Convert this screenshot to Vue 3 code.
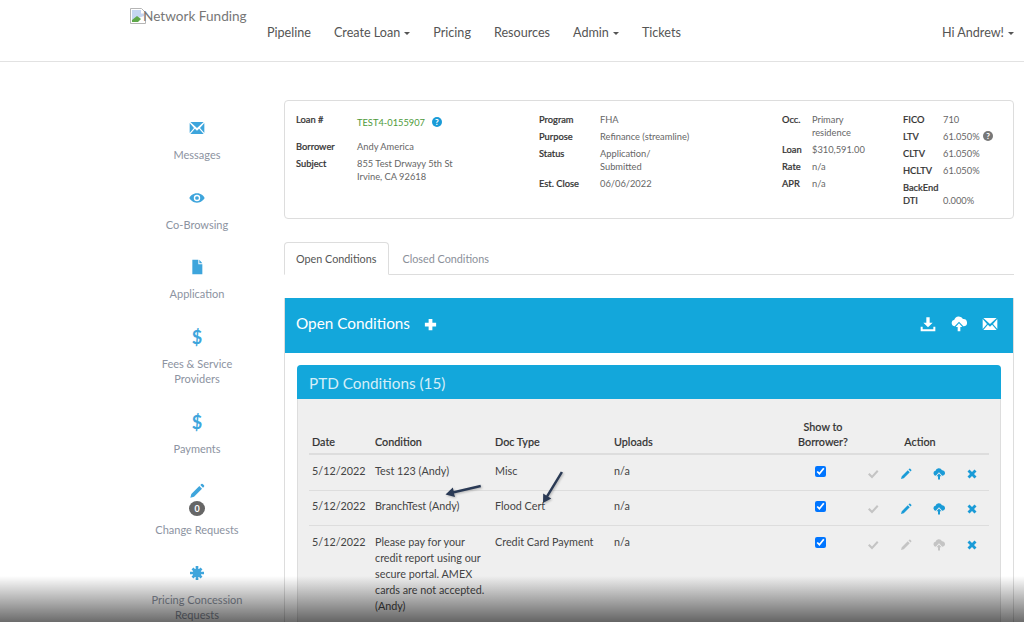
<script setup>
const icons = {
  envelope: "M2 3h20L12 12z M1 4.5v15L7.5 12z M23 4.5v15L16.5 12z M2 21h20l-6.8-7.8L12 16l-3.2-2.8z",
  eye: "M12 5C6 5 2 9 .5 12 2 15 6 19 12 19s10-4 11.5-7C22 9 18 5 12 5z M12 7.2a4.8 4.8 0 1 0 0 9.6 4.8 4.8 0 0 0 0-9.6z M12 9.2a2.8 2.8 0 1 1 0 5.6 2.8 2.8 0 0 1 0-5.6z",
  file: "M5 1h9v7h6v15H5z M15.5 1l4.5 5.2h-4.5z",
  pencil: "M2 22l1.5-5.5L15.5 4.5l4 4L7.5 20.5z M17 3l1.5-1.5a1.5 1.5 0 0 1 2 0l2 2a1.5 1.5 0 0 1 0 2L21 7z",
  cert: "M10 1.5h4v21h-4z M1.5 10h21v4h-21z M3.8 6.6l2.8-2.8 13.6 13.6-2.8 2.8z M17.4 3.8l2.8 2.8L6.6 20.2l-2.8-2.8z M12 5.5a6.5 6.5 0 1 1 0 13 6.5 6.5 0 0 1 0-13z",
  download: "M9.5 2h5v8H19l-7 7-7-7h4.5z M1 16h3v4h16v-4h3v7H1z",
  cloud: "M6 15.5a5 5 0 0 1-1-9.9A7 7 0 0 1 18 4.5a5.5 5.5 0 0 1 1 11h-.5L12 8.5l-6.5 7z M12 11l5 5.5h-3V23h-4v-6.5H7z",
  check: "M2 13l3-3 5 5L20 4l3 3L10 21z",
  remove: "M7 3l5 5 5-5 4 4-5 5 5 5-4 4-5-5-5 5-4-4 5-5-5-5z",
  plus: "M9 3h6v6h6v6h-6v6H9v-6H3V9h6z"
};

const nav = [
  { label: "Pipeline" },
  { label: "Create Loan", caret: true },
  { label: "Pricing" },
  { label: "Resources" },
  { label: "Admin", caret: true },
  { label: "Tickets" }
];

const sideItems = [
  { icon: "envelope", label: "Messages" },
  { icon: "eye", label: "Co-Browsing" },
  { icon: "file", label: "Application" },
  { dollar: true, label: "Fees & Service Providers" },
  { dollar: true, label: "Payments" },
  { icon: "pencil", label: "Change Requests", badge: 0 },
  { icon: "cert", label: "Pricing Concession Requests" }
];

const rows = [
  { date: "5/12/2022", cond: "Test 123 (Andy)", doc: "Misc", active: true },
  { date: "5/12/2022", cond: "BranchTest (Andy)", doc: "Flood Cert", active: true },
  {
    date: "5/12/2022",
    cond: "Please pay for your credit report using our secure portal. AMEX cards are not accepted. (Andy)",
    doc: "Credit Card Payment",
    active: false
  }
];
</script>

<template>
  <div class="page">
    <header class="topbar">
      <div class="logo">
        <svg class="broken" viewBox="0 0 16 16">
          <path d="M.5.5h11l4 4v11H.5z" fill="#fff" stroke="#b5b5b5" />
          <path d="M2 2h9v3.5h3V8L2 12z" fill="#c5d6f2" />
          <path d="M2 14v-2l5-4 4 3-3 3z" fill="#5fa84a" />
        </svg>
        <span>Network Funding</span>
      </div>
      <nav class="nav">
        <a v-for="n in nav" :key="n.label" class="nav-link">
          {{ n.label }}<i v-if="n.caret" class="caret"></i>
        </a>
      </nav>
      <a class="nav-link user">Hi Andrew!<i class="caret"></i></a>
    </header>

    <div class="main">
      <aside class="side">
        <div v-for="s in sideItems" :key="s.label" class="side-item">
          <div class="side-icon">
            <span v-if="s.dollar" class="dollar">$</span>
            <svg v-else viewBox="0 0 24 24">
              <path :fill-rule="s.icon === 'eye' ? 'evenodd' : 'nonzero'" :d="icons[s.icon]" />
            </svg>
          </div>
          <span v-if="s.badge !== undefined" class="badge">{{ s.badge }}</span>
          <div class="side-label">{{ s.label }}</div>
        </div>
      </aside>

      <div class="content">
        <section class="loan-card">
          <dl class="col col1">
            <dt class="tall">Loan #</dt>
            <dd class="tall">
              <span class="loan-no">TEST4-0155907</span>
              <span class="help blue">?</span>
            </dd>
            <dt>Borrower</dt><dd>Andy America</dd>
            <dt>Subject</dt><dd>855 Test Drwayy 5th St<br />Irvine, CA 92618</dd>
          </dl>
          <dl class="col col2">
            <dt>Program</dt><dd>FHA</dd>
            <dt>Purpose</dt><dd>Refinance (streamline)</dd>
            <dt>Status</dt><dd>Application/<br />Submitted</dd>
            <dt>Est. Close</dt><dd>06/06/2022</dd>
          </dl>
          <dl class="col col3">
            <dt>Occ.</dt><dd>Primary<br />residence</dd>
            <dt>Loan</dt><dd>$310,591.00</dd>
            <dt>Rate</dt><dd>n/a</dd>
            <dt>APR</dt><dd>n/a</dd>
          </dl>
          <dl class="col col4">
            <dt>FICO</dt><dd>710</dd>
            <dt>LTV</dt><dd>61.050% <span class="help grey">?</span></dd>
            <dt>CLTV</dt><dd>61.050%</dd>
            <dt>HCLTV</dt><dd>61.050%</dd>
            <dt>BackEnd DTI</dt><dd class="bottom">0.000%</dd>
          </dl>
        </section>

        <div class="tabs">
          <a class="tab active">Open Conditions</a>
          <a class="tab">Closed Conditions</a>
        </div>

        <section class="panel">
          <div class="panel-head">
            <h2>Open Conditions</h2>
            <svg class="head-plus" viewBox="0 0 24 24"><path :d="icons.plus" /></svg>
            <div class="head-icons">
              <svg viewBox="0 0 24 24"><path :d="icons.download" /></svg>
              <svg viewBox="0 0 24 24"><path :d="icons.cloud" /></svg>
              <svg viewBox="0 0 24 24"><path :d="icons.envelope" /></svg>
            </div>
          </div>
          <div class="panel-body">
            <div class="inner">
              <h3>PTD Conditions (15)</h3>
              <div class="inner-body">
                <table>
                  <thead>
                    <tr>
                      <th class="c-date">Date</th>
                      <th class="c-cond">Condition</th>
                      <th class="c-doc">Doc Type</th>
                      <th class="c-up">Uploads</th>
                      <th class="c-show">Show to<br />Borrower?</th>
                      <th colspan="4" class="c-action">Action</th>
                    </tr>
                  </thead>
                  <tbody>
                    <tr v-for="r in rows" :key="r.cond">
                      <td>{{ r.date }}</td>
                      <td>{{ r.cond }}</td>
                      <td>{{ r.doc }}</td>
                      <td>n/a</td>
                      <td><input type="checkbox" checked /></td>
                      <td class="act"><svg viewBox="0 0 24 24" class="off"><path :d="icons.check" /></svg></td>
                      <td class="act"><svg viewBox="0 0 24 24" :class="{ off: !r.active }"><path :d="icons.pencil" /></svg></td>
                      <td class="act"><svg viewBox="0 0 24 24" :class="{ off: !r.active }"><path :d="icons.cloud" /></svg></td>
                      <td class="act"><svg viewBox="0 0 24 24"><path :d="icons.remove" /></svg></td>
                    </tr>
                  </tbody>
                </table>
              </div>
            </div>
          </div>
        </section>
      </div>
    </div>

    <!-- arrows drawn on the screenshot -->
    <svg class="marks" viewBox="0 0 1024 622">
      <g fill="#2a3a55">
        <path d="M480.5 484.8l.5 2.4-27 6.3 1 3.5-9.5-2.6 7.3-6.8.9 3.4z" />
        <path d="M560.8 471.4l2.2 1.2-14.7 24.2 3 1.8-8.3 4.4.2-9.4 3 1.8z" />
      </g>
    </svg>
    <div class="fade"></div>
  </div>
</template>

<style scoped>
.page {
  position: relative;
  height: 622px;
  overflow: hidden;
  background: #fff;
  font-family: Lato, "Open Sans", sans-serif;
  color: #555;
}
.topbar {
  position: relative;
  display: flex;
  align-items: flex-start;
  height: 61px;
  border-bottom: 1px solid #e2e2e2;
  padding-left: 130px;
  box-sizing: content-box;
}
.logo {
  display: flex;
  align-items: flex-start;
  width: 137px;
  padding-top: 8px;
  font-size: 13.6px;
  line-height: 16px;
  color: #777;
  white-space: nowrap;
}
.broken {
  width: 16px;
  height: 16px;
  margin-right: -3px;
  flex: none;
}
.nav {
  display: flex;
  gap: 23px;
  padding-top: 25px;
}
.nav-link {
  font-size: 12.6px;
  line-height: 16px;
  color: #555;
  white-space: nowrap;
}
.user {
  margin-left: auto;
  margin-right: 10px;
  padding-top: 25px;
}
.caret {
  display: inline-block;
  margin-left: 4px;
  vertical-align: middle;
  border-top: 3.5px solid #555;
  border-left: 3.5px solid transparent;
  border-right: 3.5px solid transparent;
}
.main {
  display: flex;
  padding-top: 38px;
}
.side {
  width: 134px;
  margin-left: 130px;
  margin-right: 20px;
  flex: none;
  padding-top: 18px;
}
.side-item {
  display: flex;
  flex-direction: column;
  align-items: center;
  text-align: center;
  margin-bottom: 25px;
}
.side-icon {
  height: 20px;
  display: flex;
  align-items: center;
  justify-content: center;
  margin-bottom: 9px;
}
.side-icon svg {
  width: 16px;
  height: 16px;
  fill: #3ea5dc;
}
.dollar {
  font-size: 18px;
  font-weight: 700;
  line-height: 20px;
  color: #3ea5dc;
}
.badge {
  width: 16px;
  height: 15px;
  margin-top: -9px;
  margin-bottom: 6px;
  border-radius: 50%;
  background: #666;
  color: #fff;
  font-size: 9px;
  font-weight: 700;
  line-height: 15px;
}
.side-label {
  width: 110px;
  font-size: 11px;
  line-height: 15.5px;
  color: #8c93a1;
}
.content {
  width: 730px;
  flex: none;
}
.loan-card {
  position: relative;
  display: flex;
  height: 119px;
  box-sizing: border-box;
  padding: 12px 0 0 11px;
  border: 1px solid #ddd;
  border-radius: 4px;
  font-size: 9.3px;
  line-height: 13px;
}
.col {
  display: grid;
  align-content: start;
  margin: 0;
  row-gap: 4px;
}
.col1 { grid-template-columns: 61px 1fr; width: 243px; }
.col2 { grid-template-columns: 61px 1fr; width: 243px; }
.col3 { grid-template-columns: 30px 1fr; width: 121px; }
.col4 { grid-template-columns: 40px 1fr; width: 100px; }
dt {
  color: #333;
  font-weight: 500;
  -webkit-text-stroke: 0.2px #333;
}
dd {
  margin: 0;
  color: #666;
}
.tall { height: 23px; }
.bottom { align-self: end; }
.loan-no {
  display: inline-block;
  margin-top: 3px;
  margin-right: 6px;
  color: #4e9a3a;
}
.help {
  display: inline-block;
  width: 10px;
  height: 10px;
  margin-left: 1px;
  border-radius: 50%;
  color: #fff;
  font-size: 8px;
  font-weight: 900;
  line-height: 10px;
  text-align: center;
  vertical-align: 1px;
}
.help.blue { background: #1a9bd7; }
.help.grey { background: #777; }
.tabs {
  display: flex;
  margin-top: 23px;
  height: 33px;
  box-sizing: border-box;
  border-bottom: 1px solid #ddd;
}
.tab {
  padding: 0 12px 0 11px;
  border: 1px solid transparent;
  font-size: 10.8px;
  line-height: 32px;
  height: 33px;
  color: #8a8f99;
  box-sizing: border-box;
}
.tab + .tab {
  margin-left: 1px;
}
.tab.active {
  color: #555;
  background: #fff;
  border-color: #ddd #ddd #fff;
  border-radius: 4px 4px 0 0;
}
.panel {
  margin-top: 23px;
  border-right: 1px solid #ddd;
  border-left: 1px solid #ddd;
}
.panel-head {
  display: flex;
  align-items: center;
  height: 55px;
  padding: 0 15px 3px 11px;
  box-sizing: border-box;
  background: #13a7db;
}
.panel-head h2 {
  margin: 0 0 3px;
  font-size: 15.3px;
  font-weight: 400;
  color: #fff;
}
.head-plus {
  width: 15px;
  height: 15px;
  margin-left: 13px;
  fill: #fff;
}
.head-icons {
  display: flex;
  gap: 15px;
  margin-left: auto;
}
.head-icons svg {
  width: 16px;
  height: 16px;
  fill: #fff;
}
.panel-body {
  padding: 12px 12px 0;
}
.inner {
  border: 1px solid #ddd;
  border-radius: 4px 4px 0 0;
  background: #efefef;
}
.inner h3 {
  margin: -1px -1px 0;
  height: 33px;
  padding: 1px 0 0 12px;
  font-size: 15.3px;
  font-weight: 400;
  line-height: 34px;
  color: #d5eef8;
  background: #13a7db;
  border-radius: 4px 4px 0 0;
}
.inner-body {
  padding: 20px 11px 0 11px;
  height: 260px;
}
table {
  width: 680px;
  table-layout: fixed;
  border-collapse: collapse;
  font-size: 10.8px;
  line-height: 16px;
  color: #444;
}
th {
  padding: 0 3px 4px;
  font-weight: 500;
  line-height: 15px;
  color: #333;
  text-align: left;
  vertical-align: bottom;
  border-bottom: 2px solid #ddd;
  -webkit-text-stroke: 0.15px #333;
}
.c-date { width: 57px; }
.c-cond { width: 114px; }
.c-doc { width: 113px; }
.c-up { width: 173px; }
.c-show { width: 60px; text-align: center; }
.c-action { text-align: center; padding-right: 8px; }
td {
  padding: 7.5px 3px 11px;
  vertical-align: top;
  border-bottom: 1px solid #ddd;
}
td input {
  display: block;
  width: 11px;
  height: 11px;
  margin: 3px 0 0 22px;
}
.act {
  padding-bottom: 0;
}
.act svg {
  display: block;
  width: 12px;
  height: 12px;
  margin: 5px auto 0;
  fill: #1a9bd7;
}
.act svg.off {
  fill: #c4c4c4;
}
.marks {
  position: absolute;
  left: 0;
  top: 0;
  width: 1024px;
  height: 622px;
  filter: drop-shadow(1px 1px 1px rgba(0, 0, 0, 0.25));
  pointer-events: none;
}
.fade {
  position: absolute;
  left: 0;
  right: 0;
  bottom: 0;
  height: 46px;
  background: linear-gradient(to bottom, rgba(0, 0, 0, 0), rgba(0, 0, 0, 0.58));
  pointer-events: none;
}
</style>

<style>
html, body {
  margin: 0;
  overflow: hidden;
}
</style>
